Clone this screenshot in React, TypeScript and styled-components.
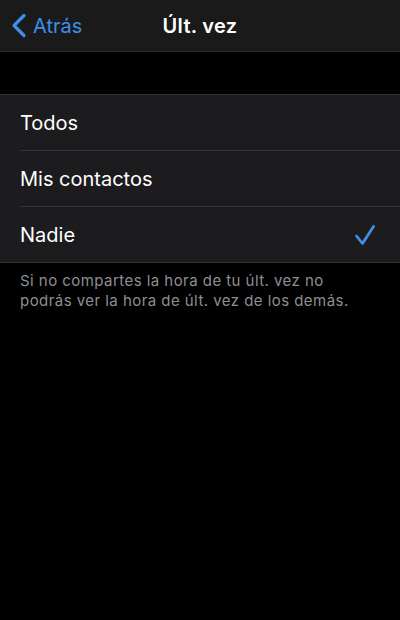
import styled, { createGlobalStyle } from "styled-components";

const GlobalStyle = createGlobalStyle`
    html, body {
        margin: 0;
        padding: 0;
        background: #000;
    }
    body {
        font-family: Inter, "Liberation Sans", Arial, sans-serif;
        -webkit-font-smoothing: antialiased;
    }
`

const options = ["Todos", "Mis contactos", "Nadie"];
const selected = "Nadie";

export default function App() {
    return (
        <>
            <GlobalStyle/>
            <StyledScreen>
                <NavBar>
                    <BackButton>
                        <svg width="17" height="25" viewBox="0 0 17 25">
                            <path d="M14 2.5 L4 12.5 L14 22.5" fill="none" stroke="#3f8ee8" strokeWidth="3.2"
                                  strokeLinecap="round" strokeLinejoin="round"/>
                        </svg>
                        <BackLabel>Atrás</BackLabel>
                    </BackButton>
                    <NavTitle>Últ. vez</NavTitle>
                </NavBar>
                <Spacer/>
                <OptionGroup>
                    {options.map((o, i) => (
                        <OptionRow key={o} $last={i === options.length - 1}>
                            <OptionLabel>{o}</OptionLabel>
                            {o === selected && (
                                <svg width="22" height="22" viewBox="0 0 22 22">
                                    <path d="M2.5 12 L8.5 19.5 L19.5 2.5" fill="none" stroke="#3f8ee8" strokeWidth="2.8"
                                          strokeLinecap="round" strokeLinejoin="round"/>
                                </svg>
                            )}
                        </OptionRow>
                    ))}
                </OptionGroup>
                <Footnote>Si no compartes la hora de tu últ. vez no podrás ver la hora de últ. vez de los demás.</Footnote>
            </StyledScreen>
        </>
    );
}

const StyledScreen = styled.div`
    width: 400px;
    min-height: 620px;
    background: #000;
    color: #fff;`
const NavBar = styled.header`
    position: relative;
    height: 51px;
    background: #1a1a1b;
    border-bottom: 1px solid #2c2c2e;
    display: flex;
    align-items: center;
    justify-content: center;`
const BackButton = styled.div`
    position: absolute;
    left: 10px;
    top: 0;
    bottom: 0;
    display: flex;
    align-items: center;
    gap: 6px;`
const BackLabel = styled.span`
    color: #3f8ee8;
    font-size: 20px;`
const NavTitle = styled.h1`
    margin: 0;
    font-size: 20px;
    font-weight: 600;
    letter-spacing: 0.3px;`
const Spacer = styled.div`
    height: 42px;`
const OptionGroup = styled.section`
    background: #1c1c1e;
    border-top: 1px solid #333335;
    border-bottom: 1px solid #333335;
    padding-left: 20px;`
const OptionRow = styled.div<{ $last: boolean }>`
    height: 55px;
    display: flex;
    align-items: center;
    justify-content: space-between;
    padding-right: 24px;
    border-bottom: ${p => p.$last ? "none" : "1px solid #333335"};`
const OptionLabel = styled.span`
    font-size: 20px;`
const Footnote = styled.p`
    margin: 0;
    padding: 8px 40px 0 20px;
    color: #8e8e93;
    font-size: 15px;
    line-height: 20px;
    letter-spacing: 0.45px;`
